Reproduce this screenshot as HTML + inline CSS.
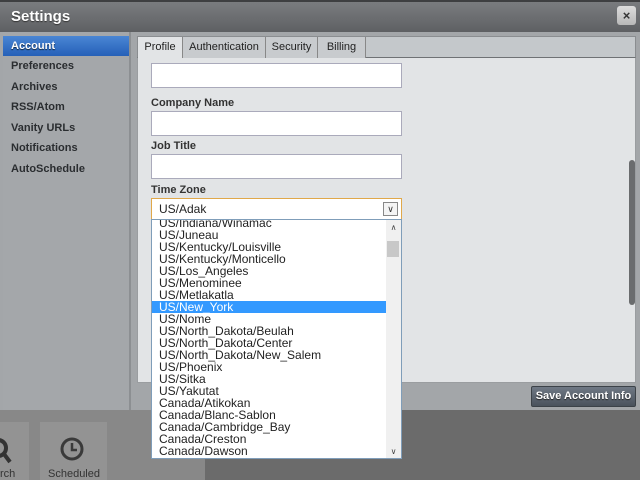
<!DOCTYPE html>
<html><head><meta charset="utf-8"><style>
*{margin:0;padding:0;box-sizing:border-box}
body{width:640px;height:480px;overflow:hidden;background:#6b6b6b;font-family:"Liberation Sans",Arial,sans-serif;position:relative}
.abs{position:absolute}
.bgl{left:0;top:410px;width:205px;height:70px;background:#888}
.tile{background:#939393}
.title{left:0;top:0;width:640px;height:32px;background:linear-gradient(#7a7c7f,#5e6063);border-top:2px solid #3e3f41}
.title span{position:absolute;left:11px;top:6px;color:#fff;font-weight:bold;font-size:15px;text-shadow:0 1px 1px #333}
.close{left:617px;top:6px;width:19px;height:19px;background:linear-gradient(#ddd,#b8b8b8);border-radius:3px;font-size:13px;font-weight:bold;text-align:center;line-height:19px;color:#333}
.body{left:0;top:32px;width:640px;height:378px;background:#a3a6a9}
.side{left:3px;top:32px;width:128px;height:378px;background:#a4a7aa;border-right:2px solid #8c8f92}
.side div{height:20.5px;line-height:20px;padding-left:8px;font-size:11px;font-weight:bold;color:#2a2d30}
.side .on{background:linear-gradient(#4a86d4,#2560b8);color:#fff;text-shadow:0 1px 1px #123;margin-top:4px;height:20px}
.tabbar{left:137px;top:36px;width:499px;height:22px;background:#c4c8cb;border:1px solid #8a8d90;border-bottom:1px solid #6f7275}
.tab{position:absolute;top:0;height:21px;line-height:20px;font-size:11px;color:#222;text-align:center;border-right:1px solid #888;background:#c8cbce}
.content{left:137px;top:58px;width:499px;height:325px;background:#e2e4e6;border:1px solid #9a9da0;border-top:none}
.inp{position:absolute;left:151px;width:251px;height:25px;background:#fff;border:1px solid #aab}
.lbl{position:absolute;left:151px;font-size:11px;font-weight:bold;color:#333}
.sel{left:151px;top:198px;width:251px;height:22px;background:#fff;border:1px solid #e0a84a;font-size:12px;color:#222;padding:3px 0 0 7px}
.arr{left:383px;top:202px;width:15px;height:14px;border:1px solid #888;background:#f4f4f4;font-size:9px;text-align:center;line-height:13px;color:#333}
.list{left:151px;top:219px;width:251px;height:240px;background:#fff;border:1px solid #7f9db9;overflow:hidden}
.items{position:absolute;left:0;top:-3px;width:236px}
.items div{height:12px;line-height:12px;font-size:12px;color:#222;padding-left:7px;white-space:nowrap}
.items .hl{background:#3399ff;color:#fff}
.sb{position:absolute;right:0;top:0;width:15px;height:238px;background:#f0f0f0}
.thumb{position:absolute;left:1px;top:21px;width:12px;height:16px;background:#c8c8c8}
.pscroll{left:629px;top:160px;width:6px;height:145px;background:#6a6c6e;border-radius:3px}
.btn{left:531px;top:386px;width:105px;height:21px;background:linear-gradient(#6f7884,#4a525c);border:1px solid #3c4248;border-radius:2px;color:#fff;font-size:11px;font-weight:bold;text-align:center;line-height:19px;text-shadow:0 1px 1px #222}
</style></head><body>
<div class="abs bgl"></div>
<div class="abs tile" style="left:0;top:422px;width:29px;height:58px"></div>
<div class="abs tile" style="left:40px;top:422px;width:67px;height:58px"></div>
<svg class="abs" style="left:0;top:436px" width="12" height="30"><circle cx="-2" cy="12" r="8" fill="none" stroke="#333" stroke-width="4"/><path d="M4 18 L10 26" stroke="#333" stroke-width="4"/></svg>
<svg class="abs" style="left:59px;top:436px" width="26" height="26"><circle cx="13" cy="13" r="10" fill="none" stroke="#3a3a3a" stroke-width="3"/><path d="M13 7 V14 H18" fill="none" stroke="#3a3a3a" stroke-width="2.5"/></svg>
<div class="abs" style="left:0;top:468px;font-size:11px;color:#333">rch</div>
<div class="abs" style="left:48px;top:468px;font-size:11px;color:#333">Scheduled</div>

<div class="abs body"></div>
<div class="abs title"><span>Settings</span></div>
<div class="abs close">×</div>
<div class="abs side">
<div class="on">Account</div><div>Preferences</div><div>Archives</div><div>RSS/Atom</div><div>Vanity URLs</div><div>Notifications</div><div>AutoSchedule</div>
</div>
<div class="abs tabbar">
<div class="tab" style="left:0;width:45px;background:#e2e4e6;height:22px">Profile</div>
<div class="tab" style="left:45px;width:83px">Authentication</div>
<div class="tab" style="left:128px;width:52px">Security</div>
<div class="tab" style="left:180px;width:48px">Billing</div>
</div>
<div class="abs content"></div>
<div class="inp" style="top:63px"></div>
<div class="lbl" style="top:97px">Company Name</div>
<div class="inp" style="top:111px"></div>
<div class="lbl" style="top:140px">Job Title</div>
<div class="inp" style="top:154px"></div>
<div class="lbl" style="top:184px">Time Zone</div>
<div class="abs sel">US/Adak</div>
<div class="abs arr">∨</div>
<div class="abs list"><div class="items">
<div>US/Indiana/Winamac</div><div>US/Juneau</div><div>US/Kentucky/Louisville</div><div>US/Kentucky/Monticello</div><div>US/Los_Angeles</div><div>US/Menominee</div><div>US/Metlakatla</div><div class="hl">US/New_York</div><div>US/Nome</div><div>US/North_Dakota/Beulah</div><div>US/North_Dakota/Center</div><div>US/North_Dakota/New_Salem</div><div>US/Phoenix</div><div>US/Sitka</div><div>US/Yakutat</div><div>Canada/Atikokan</div><div>Canada/Blanc-Sablon</div><div>Canada/Cambridge_Bay</div><div>Canada/Creston</div><div>Canada/Dawson</div><div>Canada/Dawson_Creek</div>
</div><div class="sb"><div style="font-size:8px;text-align:center;margin-top:3px;color:#444">∧</div><div class="thumb"></div><div style="position:absolute;bottom:2px;width:15px;font-size:8px;text-align:center;color:#444">∨</div></div></div>
<div class="abs pscroll"></div>
<div class="abs btn">Save Account Info</div>
</body></html>
